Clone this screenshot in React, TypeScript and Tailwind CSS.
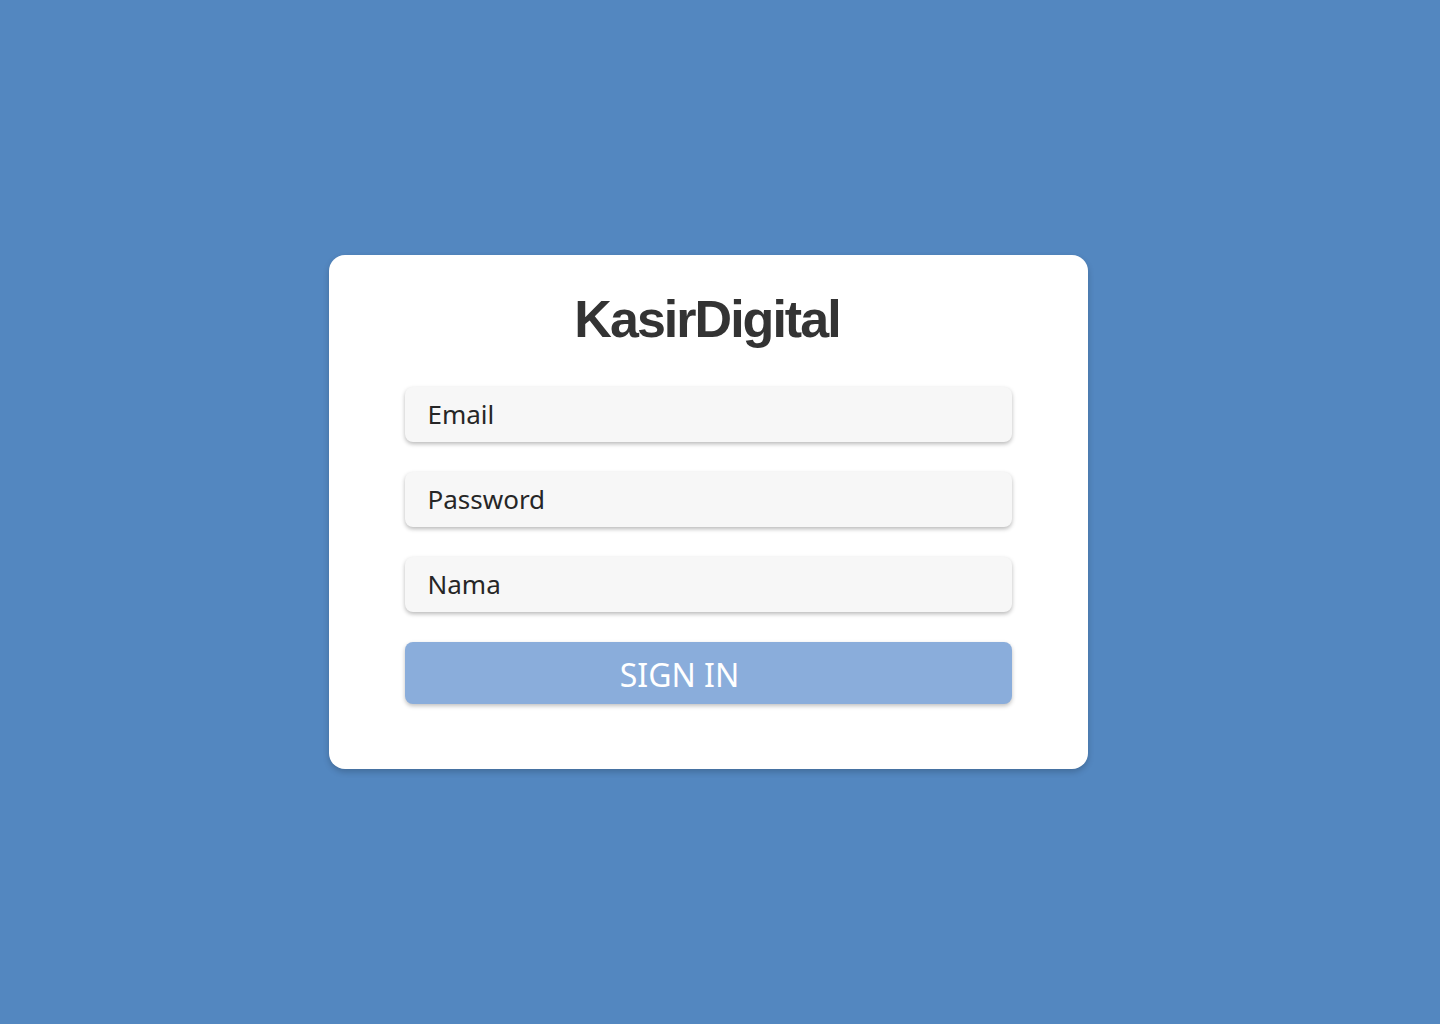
import React from 'react';

const fields = ['Email', 'Password', 'Nama'];

const Field: React.FC<{ label: string }> = ({ label }) => (
  <div className="h-[55px] w-full rounded-[8px] bg-[#f7f7f7] shadow-[0_2px_4px_rgba(0,0,0,0.28)] flex items-center pl-[23px]">
    <span className="text-[26px] text-[#262626] font-['Noto_Sans',sans-serif]">{label}</span>
  </div>
);

export default function App() {
  return (
    <div className="min-h-[1024px] w-full bg-[#5387c0] flex items-center justify-center pr-[24px]">
      <div className="w-[759px] rounded-[16px] bg-white shadow-[0_3px_6px_rgba(0,0,0,0.2)] px-[76px] pt-[38px] pb-[65px]">
        <h1 className="text-center text-[52px] leading-none font-bold tracking-[-0.038em] text-[#333333] font-['Liberation_Sans',Arial,sans-serif] pr-[2px]">
          KasirDigital
        </h1>
        <div className="mt-[42px] flex flex-col gap-[30px]">
          {fields.map((f) => (
            <Field key={f} label={f} />
          ))}
          <button className="h-[62px] w-full rounded-[8px] bg-[#8aaddb] shadow-[0_2px_4px_rgba(0,0,0,0.25)] flex items-center justify-center pr-[57px] pt-[4px]">
            <span className="text-[32px] text-white font-['Noto_Sans',sans-serif]">SIGN IN</span>
          </button>
        </div>
      </div>
    </div>
  );
}
